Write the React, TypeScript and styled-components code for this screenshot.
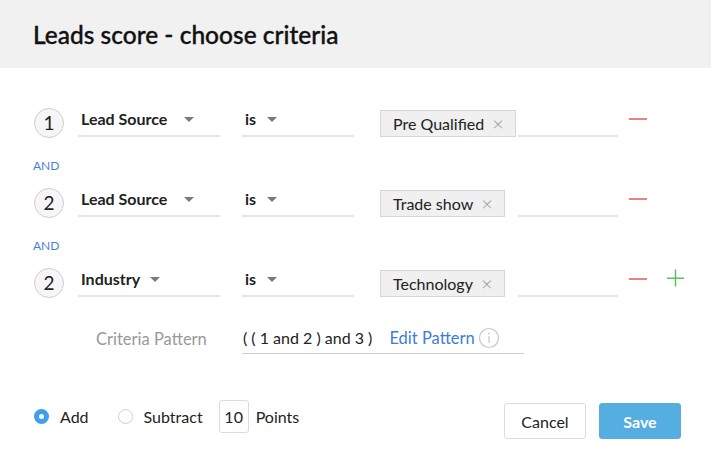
import styled, { createGlobalStyle } from "styled-components";

const GlobalStyle = createGlobalStyle`
  body {
    margin: 0;
    background: #ffffff;
    font-family: Lato, "Open Sans", sans-serif;
    color: #222;
  }
`;

const Page = styled.div`
  width: 711px;
  height: 469px;
  background: #fff;
  overflow: hidden;
`;

const Header = styled.header`
  height: 68px;
  background: #f1f1f1;
  display: flex;
  align-items: center;
  padding-left: 33px;
`;

const Title = styled.h1`
  margin: 0;
  font-size: 24.5px;
  font-weight: 500;
  color: #111;
  -webkit-text-stroke: 0.35px #111;
`;

const Body = styled.div`
  padding: 39px 0 0 34px;
  display: flex;
  flex-direction: column;
`;

const Row = styled.div`
  display: flex;
  align-items: center;
  height: 31px;
`;

const StepCircle = styled.div`
  width: 30px;
  height: 30px;
  box-sizing: border-box;
  border: 1px solid #cfcfcf;
  border-radius: 50%;
  background: #f6f6f6;
  display: flex;
  align-items: center;
  justify-content: center;
  font-size: 19px;
  color: #222;
`;

const Field = styled.div<{ $width: number; $gap: number }>`
  width: ${(p) => p.$width}px;
  margin-left: ${(p) => p.$gap}px;
  height: 30px;
  box-sizing: border-box;
  border-bottom: 2px solid #e4e4e4;
  display: flex;
  align-items: center;
  padding: 0 0 6px 3px;
  font-size: 16px;
  font-weight: 700;
  color: #222;
  align-self: flex-start;
`;

const Caret = styled.span<{ $gap?: number }>`
  width: 0;
  height: 0;
  margin-left: ${(p) => p.$gap ?? 11}px;
  margin-top: 2px;
  border-left: 5px solid transparent;
  border-right: 5px solid transparent;
  border-top: 5px solid #7a7a7a;
`;

const ChipCell = styled.div`
  width: 138px;
  margin-left: 26px;
  display: flex;
  align-self: flex-start;
  margin-top: 3px;
`;

const Chip = styled.div`
  height: 27px;
  box-sizing: border-box;
  display: flex;
  align-items: center;
  padding: 0 11px 0 12px;
  background: #f0f0f0;
  border: 1px solid #d6d6d6;
  font-size: 16px;
  color: #222;
`;

const ChipClose = styled.span`
  margin-left: 8px;
  color: #999;
  font-size: 20px;
  font-weight: 300;
  line-height: 1;
  margin-top: -1px;
`;

const ValueInput = styled.div`
  width: 100px;
  height: 30px;
  box-sizing: border-box;
  border-bottom: 2px solid #e4e4e4;
  align-self: flex-start;
`;

const IconButton = styled.span<{ $gap: number }>`
  margin-left: ${(p) => p.$gap}px;
  display: flex;
  align-self: flex-start;
  margin-top: 2px;
`;

const AndLabel = styled.div`
  font-size: 12px;
  color: #4a7fd6;
  line-height: 14px;
  margin: 21px 0 14px -1px;
`;

const PatternRow = styled.div`
  display: flex;
  align-items: center;
  margin-top: 26px;
  padding-left: 62px;
`;

const PatternLabel = styled.div`
  width: 146px;
  font-size: 16.5px;
  color: #999;
`;

const PatternField = styled.div`
  width: 282px;
  height: 30px;
  box-sizing: border-box;
  border-bottom: 1px solid #cfcfcf;
  display: flex;
  align-items: center;
  padding: 0 0 2px 1px;
  font-size: 16px;
  color: #222;
`;

const EditLink = styled.a`
  margin-left: 17px;
  color: #3d7dd8;
  text-decoration: none;
  font-size: 16.5px;
`;

const InfoIcon = styled.span`
  margin-left: 3px;
  display: flex;
`;

const Footer = styled.div`
  display: flex;
  align-items: center;
  justify-content: space-between;
  padding: 0 30px 0 34px;
  margin-top: 40px;
`;

const Choices = styled.div`
  display: flex;
  align-items: center;
  font-size: 16px;
  color: #222;
`;

const Radio = styled.span<{ $checked?: boolean }>`
  width: 15px;
  height: 15px;
  box-sizing: border-box;
  border-radius: 50%;
  border: ${(p) => (p.$checked ? "5px solid #3f9fea" : "1px solid #cfcfcf")};
  background: #fff;
  margin-right: 11px;
`;

const ChoiceText = styled.span<{ $gap: number }>`
  margin-right: ${(p) => p.$gap}px;
`;

const PointsBox = styled.div`
  width: 30px;
  height: 33px;
  box-sizing: border-box;
  border: 1px solid #dcdcdc;
  border-radius: 3px;
  display: flex;
  align-items: center;
  justify-content: center;
  margin-right: 7px;
`;

const Buttons = styled.div`
  display: flex;
  gap: 13px;
  margin-top: 9px;
`;

const Button = styled.button<{ $primary?: boolean }>`
  width: 82px;
  height: 36px;
  border-radius: 3px;
  font-family: Lato, "Open Sans", sans-serif;
  font-size: 16px;
  cursor: pointer;
  border: 1px solid ${(p) => (p.$primary ? "#55ade0" : "#dcdcdc")};
  background: ${(p) => (p.$primary ? "#55ade0" : "#fff")};
  color: ${(p) => (p.$primary ? "#fff" : "#222")};
  font-weight: ${(p) => (p.$primary ? 700 : 400)};
`;

const Minus = () => (
  <svg width="18" height="20" viewBox="0 0 18 20">
    <rect x="0" y="9" width="18" height="2" fill="#f27e82" />
  </svg>
);

const Plus = () => (
  <svg width="17" height="20" viewBox="0 0 17 20">
    <rect x="0" y="8.5" width="17" height="1.5" fill="#5cc160" />
    <rect x="7.75" y="0.5" width="1.5" height="17" fill="#5cc160" />
  </svg>
);

type Criterion = {
  step: number;
  field: string;
  value: string;
  last?: boolean;
};

const criteria: Criterion[] = [
  { step: 1, field: "Lead Source", value: "Pre Qualified" },
  { step: 2, field: "Lead Source", value: "Trade show" },
  { step: 2, field: "Industry", value: "Technology", last: true },
];

export default function App() {
  return (
    <Page>
      <GlobalStyle />
      <Header>
        <Title>Leads score - choose criteria</Title>
      </Header>
      <Body>
        {criteria.map((c, i) => (
          <div key={i}>
            <Row>
              <StepCircle>{c.step}</StepCircle>
              <Field $width={142} $gap={14}>
                {c.field}
                <Caret $gap={c.field === "Lead Source" ? 17 : 10} />
              </Field>
              <Field $width={112} $gap={22}>
                is
                <Caret />
              </Field>
              <ChipCell>
                <Chip>
                  {c.value}
                  <ChipClose>×</ChipClose>
                </Chip>
              </ChipCell>
              <ValueInput />
              <IconButton $gap={11}>
                <Minus />
              </IconButton>
              {c.last && (
                <IconButton $gap={20}>
                  <Plus />
                </IconButton>
              )}
            </Row>
            {!c.last && <AndLabel>AND</AndLabel>}
          </div>
        ))}
        <PatternRow>
          <PatternLabel>Criteria Pattern</PatternLabel>
          <PatternField>
            ( ( 1 and 2 ) and 3 )
            <EditLink href="#">Edit Pattern</EditLink>
            <InfoIcon>
              <svg width="22" height="22" viewBox="0 0 22 22">
                <circle cx="11" cy="11" r="9.5" fill="none" stroke="#c8c8c8" strokeWidth="1.2" />
                <circle cx="11" cy="6.5" r="0.9" fill="#c8c8c8" />
                <rect x="10.4" y="9" width="1.2" height="7" fill="#c8c8c8" />
              </svg>
            </InfoIcon>
          </PatternField>
        </PatternRow>
      </Body>
      <Footer>
        <Choices>
          <Radio $checked />
          <ChoiceText $gap={29}>Add</ChoiceText>
          <Radio />
          <ChoiceText $gap={16}>Subtract</ChoiceText>
          <PointsBox>10</PointsBox>
          <span>Points</span>
        </Choices>
        <Buttons>
          <Button>Cancel</Button>
          <Button $primary>Save</Button>
        </Buttons>
      </Footer>
    </Page>
  );
}
